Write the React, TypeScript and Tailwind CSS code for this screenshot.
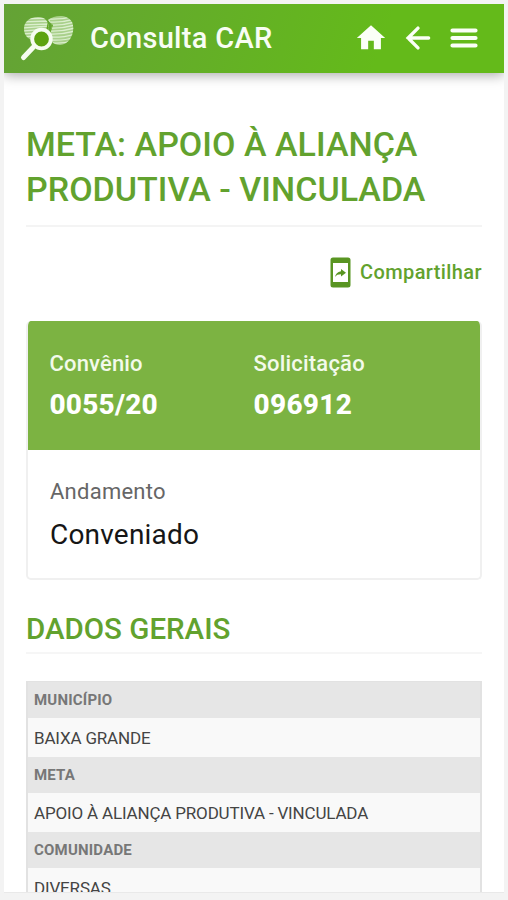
const rows = [
  { label: 'MUNICÍPIO', value: 'BAIXA GRANDE' },
  { label: 'META', value: 'APOIO À ALIANÇA PRODUTIVA - VINCULADA' },
  { label: 'COMUNIDADE', value: 'DIVERSAS' },
];

function Logo() {
  return (
    <svg className="shrink-0" width="56" height="50" viewBox="0 0 56 50" fill="none">
      <defs>
        <clipPath id="lobes">
          <path d="M29 17C31 9 27 3 19 3C10 3 5 8 5 15C5 22 11 28 20 27L28 24Z" />
          <path d="M29 6C36 1 48 0 53 8C57 17 51 31 41 31C34 31 29 26 28 19Q33 16 33 11Z" />
        </clipPath>
      </defs>
      <g clipPath="url(#lobes)">
        <rect width="56" height="32" fill="#a9d08b" />
        <path
          d="M4 5L31 4M4 8L31 7M4 11L31 10M4 14L31 12M4 17L31 15M4 20L31 18M4 23L27 21M28 5Q42 6 56 2M30 8Q42 9 56 5M30 11Q42 12 56 8M30 14Q42 15 56 11M28 17Q42 18 56 14M28 20Q42 21 56 17M28 23Q44 24 56 20M30 26Q46 27 56 23M34 29Q44 30 56 26"
          stroke="#dcefcf"
          strokeWidth="1.3"
        />
        <path d="M29 7L34 11L31 20L27 17Z" fill="#5fa31f" />
      </g>
      <path d="M14 33.5L4.5 43.5" stroke="#f6fcf1" strokeWidth="5" strokeLinecap="round" />
      <circle cx="22.5" cy="25" r="9.3" fill="#5da310" stroke="#f6fcf1" strokeWidth="3.8" />
    </svg>
  );
}

export default function App() {
  return (
    <div className="h-[900px] w-[508px] overflow-hidden bg-[#f3f3f3] px-1 pt-1 font-[Roboto,sans-serif]">
      <div className="flex h-[889px] w-[500px] flex-col overflow-hidden border-b border-[#e9e9e9] bg-white">
        <header className="flex h-[69px] w-[500px] shrink-0 items-center bg-linear-[110deg] from-[#64a236] to-[#64ba1a] to-75% pl-[15px] shadow-[0_2px_12px_rgba(0,0,0,0.35)]">
          <Logo />
          <span className="ml-[15px] w-[264px] shrink-0 text-[29px] font-medium tracking-[0.3px] whitespace-nowrap text-[#f8fdf3]">Consulta CAR</span>
          <svg className="-mt-[2px] shrink-0" width="34" height="34" viewBox="0 0 24 24" fill="#fbfff7">
            <path d="M10 20v-6h4v6h5v-8h3L12 3 2 12h3v8z" />
          </svg>
          <svg className="-mt-[2px] ml-[13px] shrink-0" width="34" height="34" viewBox="0 0 24 24" fill="none" stroke="#fbfff7" strokeWidth="2.4" strokeLinecap="round">
            <path d="M19.5 12H5M12 5L5 12l7 7" />
          </svg>
          <svg className="-mt-[2px] ml-[14px] shrink-0" width="30" height="24" viewBox="0 0 30 24" stroke="#fbfff7" strokeWidth="4.2" strokeLinecap="round">
            <path d="M3.5 4.5H26.5M3.5 12H26.5M3.5 19.5H26.5" />
          </svg>
        </header>
        <main className="flex flex-col pt-[49px] pr-[22px] pl-[22px]">
          <h1 className="h-[105px] border-b-2 border-[#f4f4f4] text-[34px] leading-[44.5px] font-medium tracking-[0.03px] whitespace-nowrap text-[#62a22e]">
            META: APOIO À ALIANÇA
            <br />
            PRODUTIVA - VINCULADA
          </h1>
          <div className="mt-[25px] flex h-[40px] items-center justify-end gap-[9px] text-[#62a22e]">
            <svg width="21" height="31" viewBox="0 0 21 31">
              <path fillRule="evenodd" fill="#599522" d="M3 0.5H18A2.5 2.5 0 0 1 20.5 3V28A2.5 2.5 0 0 1 18 30.5H3A2.5 2.5 0 0 1 .5 28V3A2.5 2.5 0 0 1 3 .5ZM3 6V25H18V6Z" />
              <path fill="#599522" d="M11 12L16 15.8L11 19.5V17.3C8 17.3 6.5 18 5 20C5.5 17 7.5 14.7 11 14.2Z" />
            </svg>
            <span className="text-[20px] leading-[40px] font-medium tracking-[0.4px]">Compartilhar</span>
          </div>
          <section className="mt-[29px] flex h-[259px] flex-col overflow-hidden rounded-[5px] border-2 border-t-0 border-[#f0f0f0]">
            <div className="-mx-px grid h-[129px] shrink-0 grid-cols-[204px_1fr] bg-[#7cb342] pt-[27px] pl-[22.5px] text-white">
              <div>
                <p className="text-[22px] leading-[31px] font-medium tracking-[0.15px] text-[#f3faeb]">Convênio</p>
                <p className="mt-[8px] text-[28px] leading-[36px] font-extrabold tracking-[0.2px]">0055/20</p>
              </div>
              <div>
                <p className="text-[22px] leading-[31px] font-medium tracking-[0.2px] text-[#f3faeb]">Solicitação</p>
                <p className="mt-[8px] text-[28px] leading-[36px] font-extrabold tracking-[0.3px]">096912</p>
              </div>
            </div>
            <div className="pt-[27px] pl-[22px]">
              <p className="text-[22px] leading-[30px] tracking-[0.25px] text-[#666]">Andamento</p>
              <p className="mt-[9px] text-[28px] leading-[38px] tracking-[0.2px] text-[#161616]">Conveniado</p>
            </div>
          </section>
          <h2 className="mt-[28px] h-[46px] border-b-2 border-[#f6f6f6] text-[29.5px] leading-[43px] font-medium whitespace-nowrap text-[#62a22e]">DADOS GERAIS</h2>
          <dl className="mt-[27px] flex flex-col border-x-2 border-t border-[#e2e2e2]">
            {rows.map((row) => (
              <div key={row.label} className="flex h-[75px] shrink-0 flex-col">
                <dt className="h-[36px] bg-[#e6e6e6] pl-[6px] text-[15px] leading-[37px] font-bold tracking-[0.2px] text-[#777]">{row.label}</dt>
                <dd className="h-[39px] bg-[#f9f9f9] pl-[6px] text-[17px] leading-[40px] tracking-[-0.17px] text-[#444]">{row.value}</dd>
              </div>
            ))}
          </dl>
        </main>
      </div>
    </div>
  );
}
